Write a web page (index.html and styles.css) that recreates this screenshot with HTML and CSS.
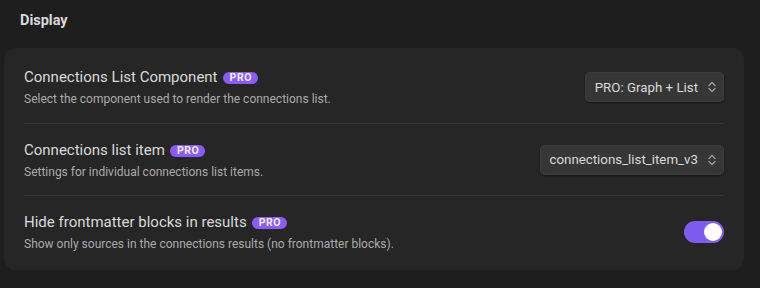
FILE: index.html
```html
<!DOCTYPE html>
<html lang="en">
<head>
    <meta charset="UTF-8">
    <title>Display settings</title>
    <link rel="stylesheet" href="styles.css">
</head>
<body>
    <h3 class="section-title">Display</h3>

    <div class="settings-card">
        <div class="setting-item">
            <div class="setting-info">
                <div class="setting-name">Connections List Component <span class="pro-badge">PRO</span></div>
                <div class="setting-desc">Select the component used to render the connections list.</div>
            </div>
            <div class="setting-control">
                <div class="dropdown">
                    <span>PRO: Graph + List</span>
                    <svg class="chevrons" width="8" height="12" viewBox="0 0 8 12"><path d="M1 4.5L4 1.5L7 4.5M1 7.5L4 10.5L7 7.5" fill="none" stroke="currentColor" stroke-width="1.2" stroke-linecap="round" stroke-linejoin="round"/></svg>
                </div>
            </div>
        </div>

        <div class="setting-item">
            <div class="setting-info">
                <div class="setting-name">Connections list item <span class="pro-badge">PRO</span></div>
                <div class="setting-desc">Settings for individual connections list items.</div>
            </div>
            <div class="setting-control">
                <div class="dropdown">
                    <span>connections_list_item_v3</span>
                    <svg class="chevrons" width="8" height="12" viewBox="0 0 8 12"><path d="M1 4.5L4 1.5L7 4.5M1 7.5L4 10.5L7 7.5" fill="none" stroke="currentColor" stroke-width="1.2" stroke-linecap="round" stroke-linejoin="round"/></svg>
                </div>
            </div>
        </div>

        <div class="setting-item">
            <div class="setting-info">
                <div class="setting-name">Hide frontmatter blocks in results <span class="pro-badge">PRO</span></div>
                <div class="setting-desc">Show only sources in the connections results (no frontmatter blocks).</div>
            </div>
            <div class="setting-control">
                <div class="toggle is-on"><div class="toggle-knob"></div></div>
            </div>
        </div>
    </div>
</body>
</html>
```

FILE: styles.css
```css
/* Genel */
body {
    margin: 0;
    padding: 0 16px 0 4px;
    background-color: #1e1e1e;
    color: #dadada;
    font-family: Roboto, "Open Sans", sans-serif;
}

.section-title {
    margin: 0;
    padding: 12px 0 0 16px;
    height: 36px;
    box-sizing: border-box;
    font-size: 14.5px;
    font-weight: 700;
    color: #dadada;
}

/* Ayar kartı */
.settings-card {
    margin-top: 12px;
    background-color: #262626;
    border-radius: 12px;
    padding: 3px 20px;
}

.setting-item {
    display: flex;
    align-items: center;
    justify-content: space-between;
    height: 72px;
    box-sizing: border-box;
    border-top: 1px solid #363636;
}

.setting-item:first-child {
    border-top: none;
}

.setting-name {
    font-size: 15px;
    line-height: 22px;
    color: #dadada;
    display: flex;
    align-items: center;
    gap: 5px;
}

.setting-desc {
    font-size: 12px;
    line-height: 18px;
    color: #ababab;
    margin-top: 2px;
}

.pro-badge {
    display: inline-block;
    background-color: #8a5cf5;
    color: #f0ecff;
    font-size: 10.5px;
    font-weight: 700;
    letter-spacing: 0.6px;
    line-height: 12px;
    padding: 0 6px 0 7px;
    border-radius: 7px;
    margin-top: 2px;
}

/* Açılır liste */
.dropdown {
    display: flex;
    align-items: center;
    gap: 10px;
    height: 30px;
    box-sizing: border-box;
    padding: 0 8px 0 10px;
    background-color: #363636;
    border-radius: 5px;
    box-shadow: 0 1px 2px rgba(0, 0, 0, 0.4), inset 0 0 0 1px #3c3c3c;
    font-size: 13.3px;
    color: #dadada;
}

.chevrons {
    color: #a0a0a0;
}

/* Anahtar */
.toggle {
    width: 40px;
    height: 22px;
    border-radius: 11px;
    background-color: #4a4a4a;
    box-sizing: border-box;
    padding: 2px;
    display: flex;
}

.toggle.is-on {
    background-color: #7f5cf0;
    justify-content: flex-end;
}

.toggle-knob {
    width: 18px;
    height: 18px;
    border-radius: 50%;
    background-color: #fff;
}
```
